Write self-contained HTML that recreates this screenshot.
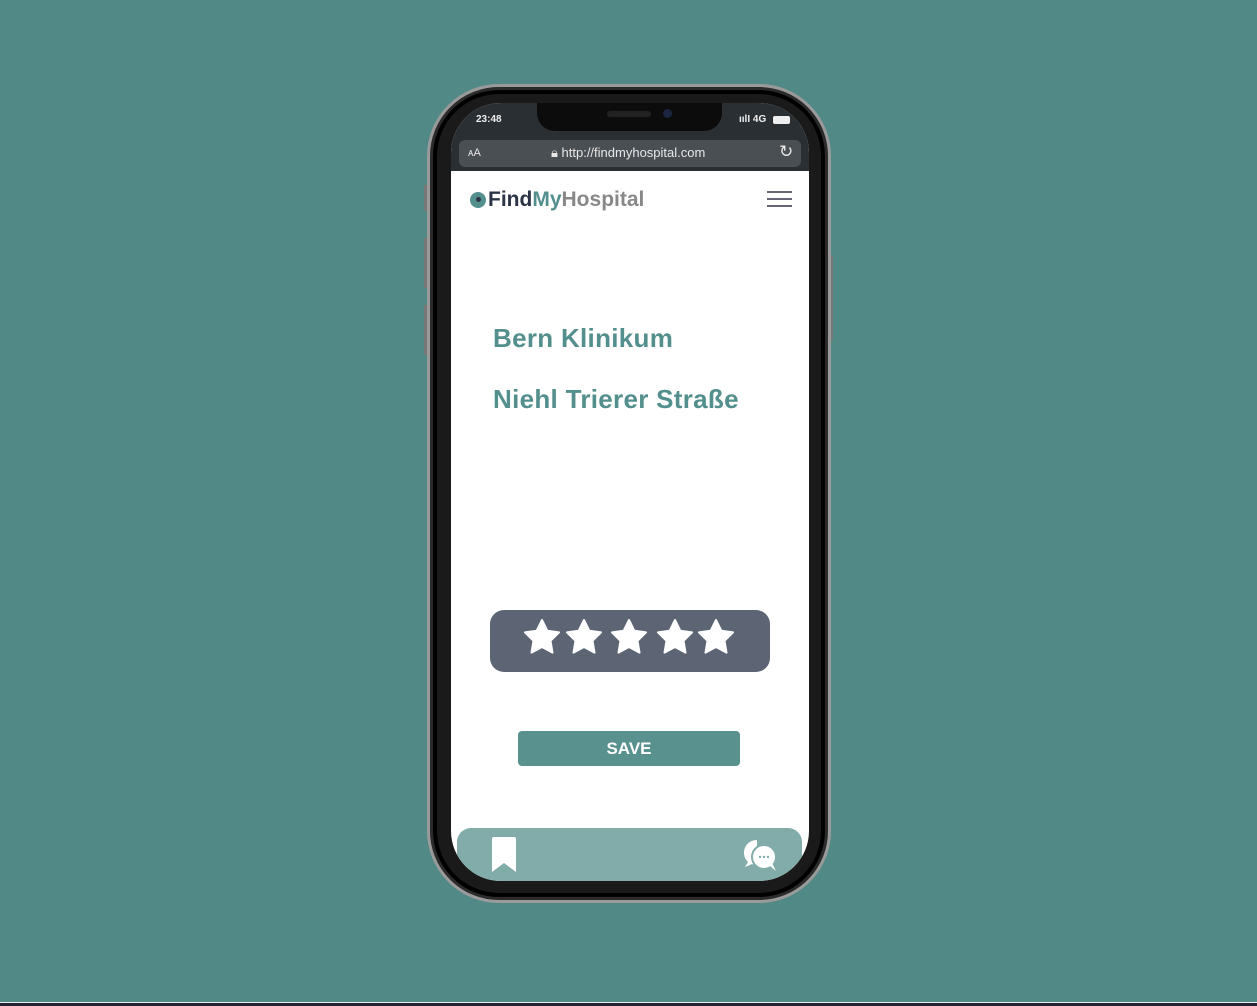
<!DOCTYPE html>
<html><head><meta charset="utf-8"><style>
*{margin:0;padding:0;box-sizing:border-box}
body{width:1257px;height:1006px;background:#518987;position:relative;overflow:hidden;font-family:"Liberation Sans",sans-serif}
.abs{position:absolute}
.phone{left:427px;top:84px;width:404px;height:819px;border-radius:72px;background:#1a1a1a;border:3px solid #9a9a9a;box-shadow:inset 0 0 0 3px #2b2b2b,inset 0 0 0 7px #000}
.screen{left:451px;top:103px;width:358px;height:778px;border-radius:50px;background:#fff;overflow:hidden}
.status{left:0;top:0;width:358px;height:68px;background:#2a2f33}
.notch{left:86px;top:0;width:185px;height:28px;background:#0c0c0c;border-radius:0 0 18px 18px}
.url{left:8px;top:37px;width:342px;height:27px;background:#4a4f54;border-radius:6px;color:#e8e8e8;font-size:13px}
.h{color:#538f8c;font-weight:bold;font-size:26px;letter-spacing:.3px}
</style></head><body>
<div class="abs" style="left:0;top:1002px;width:1257px;height:1px;background:#e6eeee"></div>
<div class="abs" style="left:0;top:1003px;width:1257px;height:3px;background:#223"></div>
<div class="abs" style="left:829px;top:255px;width:4px;height:86px;background:#777;border-radius:2px"></div>
<div class="abs" style="left:424px;top:185px;width:4px;height:26px;background:#777"></div>
<div class="abs" style="left:424px;top:238px;width:4px;height:50px;background:#777"></div>
<div class="abs" style="left:424px;top:305px;width:4px;height:50px;background:#777"></div>
<div class="abs phone"></div>
<div class="abs screen">
 <div class="abs status">
  <div class="abs notch"><div class="abs" style="left:70px;top:8px;width:44px;height:6px;border-radius:3px;background:#222"></div><div class="abs" style="left:126px;top:6px;width:9px;height:9px;border-radius:50%;background:#1b2540"></div></div>
  <div class="abs" style="left:25px;top:11px;color:#eee;font-size:10px;font-weight:bold">23:48</div>
  <div class="abs" style="left:288px;top:11px;color:#eee;font-size:10px;font-weight:bold">ıılI 4G</div>
  <div class="abs" style="left:322px;top:13px;width:17px;height:8px;background:#eee;border-radius:2px"></div>
  <div class="abs url"><span class="abs" style="left:9px;top:7px;font-size:11px">ᴀA</span><span class="abs" style="left:92px;top:5px">🔒︎ http://findmyhospital.com</span><span class="abs" style="left:320px;top:2px;font-size:17px">↻</span></div>
 </div>
 <div class="abs" style="left:19px;top:89px;width:16px;height:16px;border-radius:50%;background:#538f8c"></div>
 <div class="abs" style="left:25px;top:94px;width:5px;height:5px;border-radius:50%;background:#2d3447"></div>
 <div class="abs" style="left:37px;top:85px;font-size:21px;font-weight:bold;white-space:nowrap"><span style="color:#2d3447">Find</span><span style="color:#538f8c">My</span><span style="color:#888">Hospital</span></div>
 <div class="abs" style="left:316px;top:88px;width:25px;height:2px;background:#667"></div>
 <div class="abs" style="left:316px;top:95px;width:25px;height:2px;background:#667"></div>
 <div class="abs" style="left:316px;top:102px;width:25px;height:2px;background:#667"></div>
 <div class="abs h" style="left:42px;top:220px">Bern Klinikum</div>
 <div class="abs h" style="left:42px;top:281px">Niehl Trierer Straße</div>
 <div class="abs" style="left:39px;top:507px;width:280px;height:62px;background:#5d6575;border-radius:14px">
  <svg width="280" height="62" viewBox="0 0 280 62"><g fill="#fff">
  <path id="s" d="M0,-18 L5.3,-7.3 17,-5.6 8.5,2.8 10.5,14.6 0,9 -10.5,14.6 -8.5,2.8 -17,-5.6 -5.3,-7.3Z" transform="translate(52,28)" stroke="#fff" stroke-linejoin="round" stroke-width="2"/>
  <use href="#s" x="42"/><use href="#s" x="87"/><use href="#s" x="133"/><use href="#s" x="174"/></g></svg>
 </div>
 <div class="abs" style="left:67px;top:628px;width:222px;height:35px;background:#58918e;border-radius:4px;color:#fff;font-weight:bold;font-size:17px;text-align:center;line-height:35px">SAVE</div>
 <div class="abs" style="left:6px;top:725px;width:345px;height:60px;background:#82acaa;border-radius:14px"></div>
 <svg class="abs" style="left:40px;top:734px" width="26" height="36"><path d="M1,2 Q1,0 3,0 H23 Q25,0 25,2 V35 L13,26 L1,35Z" fill="#fff"/></svg>
 <svg class="abs" style="left:291px;top:735px" width="38" height="34"><path d="M15,2 C7,2 2,8 2,15 C2,19 4,22 6,24 L3,29 L10,26 C12,27 13,27 15,27" fill="#fff"/><circle cx="22" cy="19" r="12" fill="#fff" stroke="#82acaa" stroke-width="2"/><path d="M28,28 L34,33 L30,25Z" fill="#fff"/><g fill="#82acaa"><circle cx="18" cy="19" r="1.2"/><circle cx="22" cy="19" r="1.2"/><circle cx="26" cy="19" r="1.2"/></g></svg>
</div>
</body></html>
